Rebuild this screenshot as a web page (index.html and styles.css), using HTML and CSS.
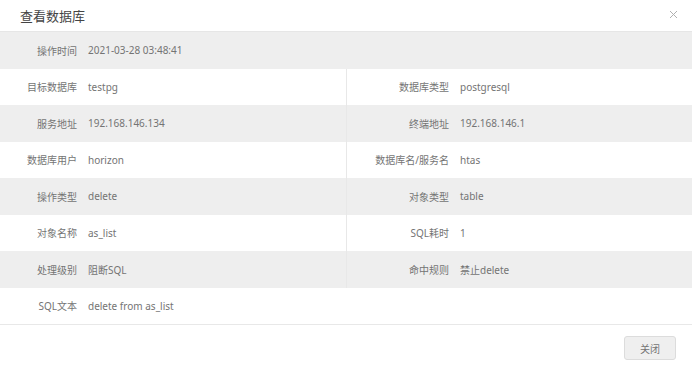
FILE: index.html
```html
<!DOCTYPE html>
<html lang="zh">

<head>
    <meta charset="UTF-8">
    <title>查看数据库</title>
    <link rel="stylesheet" href="styles.css">
</head>

<body>
    <div class="dialog">
        <div class="dialog-header">
            <span class="dialog-title">查看数据库</span>
            <span class="dialog-close">
                <svg width="9" height="9" viewBox="0 0 9 9">
                    <path d="M1 1 L8 8 M8 1 L1 8" stroke="#b0b0b0" stroke-width="1" fill="none" />
                </svg>
            </span>
        </div>
        <div class="detail">
            <div class="row full">
                <div class="cell"><span class="label">操作时间</span><span class="value">2021-03-28 03:48:41</span></div>
            </div>
            <div class="row">
                <div class="cell"><span class="label">目标数据库</span><span class="value">testpg</span></div>
                <div class="cell"><span class="label">数据库类型</span><span class="value">postgresql</span></div>
            </div>
            <div class="row">
                <div class="cell"><span class="label">服务地址</span><span class="value">192.168.146.134</span></div>
                <div class="cell"><span class="label">终端地址</span><span class="value">192.168.146.1</span></div>
            </div>
            <div class="row">
                <div class="cell"><span class="label">数据库用户</span><span class="value">horizon</span></div>
                <div class="cell"><span class="label">数据库名/服务名</span><span class="value">htas</span></div>
            </div>
            <div class="row">
                <div class="cell"><span class="label">操作类型</span><span class="value">delete</span></div>
                <div class="cell"><span class="label">对象类型</span><span class="value">table</span></div>
            </div>
            <div class="row">
                <div class="cell"><span class="label">对象名称</span><span class="value">as_list</span></div>
                <div class="cell"><span class="label">SQL耗时</span><span class="value">1</span></div>
            </div>
            <div class="row">
                <div class="cell"><span class="label">处理级别</span><span class="value">阻断SQL</span></div>
                <div class="cell"><span class="label">命中规则</span><span class="value">禁止delete</span></div>
            </div>
            <div class="row full">
                <div class="cell"><span class="label">SQL文本</span><span class="value">delete from as_list</span></div>
            </div>
        </div>
        <div class="dialog-footer">
            <button class="btn">关闭</button>
        </div>
    </div>
</body>

</html>
```

FILE: styles.css
```css
/* 기본 설정 */
html,
body {
    margin: 0;
    padding: 0;
    background-color: #fff;
    font-family: "Noto Sans", "Noto Sans CJK SC", sans-serif;
}

.dialog {
    width: 692px;
}

/* 헤더 */
.dialog-header {
    height: 31px;
    display: flex;
    align-items: center;
    justify-content: space-between;
    padding: 0 14px 0 20px;
    border-bottom: 1px solid #e6e6e6;
}

.dialog-title {
    font-size: 13px;
    color: #444;
    font-family: "Noto Sans CJK SC", sans-serif;
}

.dialog-close {
    display: flex;
    margin-top: -2px;
}

/* 상세 테이블 */
.row {
    display: grid;
    grid-template-columns: 346px 1fr;
    height: 36.5px;
}

.row:nth-child(odd) {
    background-color: #eeeeee;
}

.row.full {
    grid-template-columns: 1fr;
}

.cell {
    display: flex;
    align-items: center;
    gap: 11px;
    font-size: 10px;
    color: #747474;
}

.cell + .cell {
    border-left: 1px solid #e8e8e8;
}

.label {
    width: 77px;
    text-align: right;
    flex-shrink: 0;
}

.cell + .cell .label {
    width: 102px;
}

/* 푸터 */
.dialog-footer {
    border-top: 1px solid #e8e8e8;
    display: flex;
    justify-content: flex-end;
    padding: 11px 16px 0 0;
}

.btn {
    width: 52px;
    height: 24px;
    font-size: 10px;
    font-family: "Noto Sans CJK SC", sans-serif;
    color: #747474;
    background-color: #efefef;
    border: 1px solid #dcdcdc;
    border-radius: 3px;
    padding: 0;
}
```
